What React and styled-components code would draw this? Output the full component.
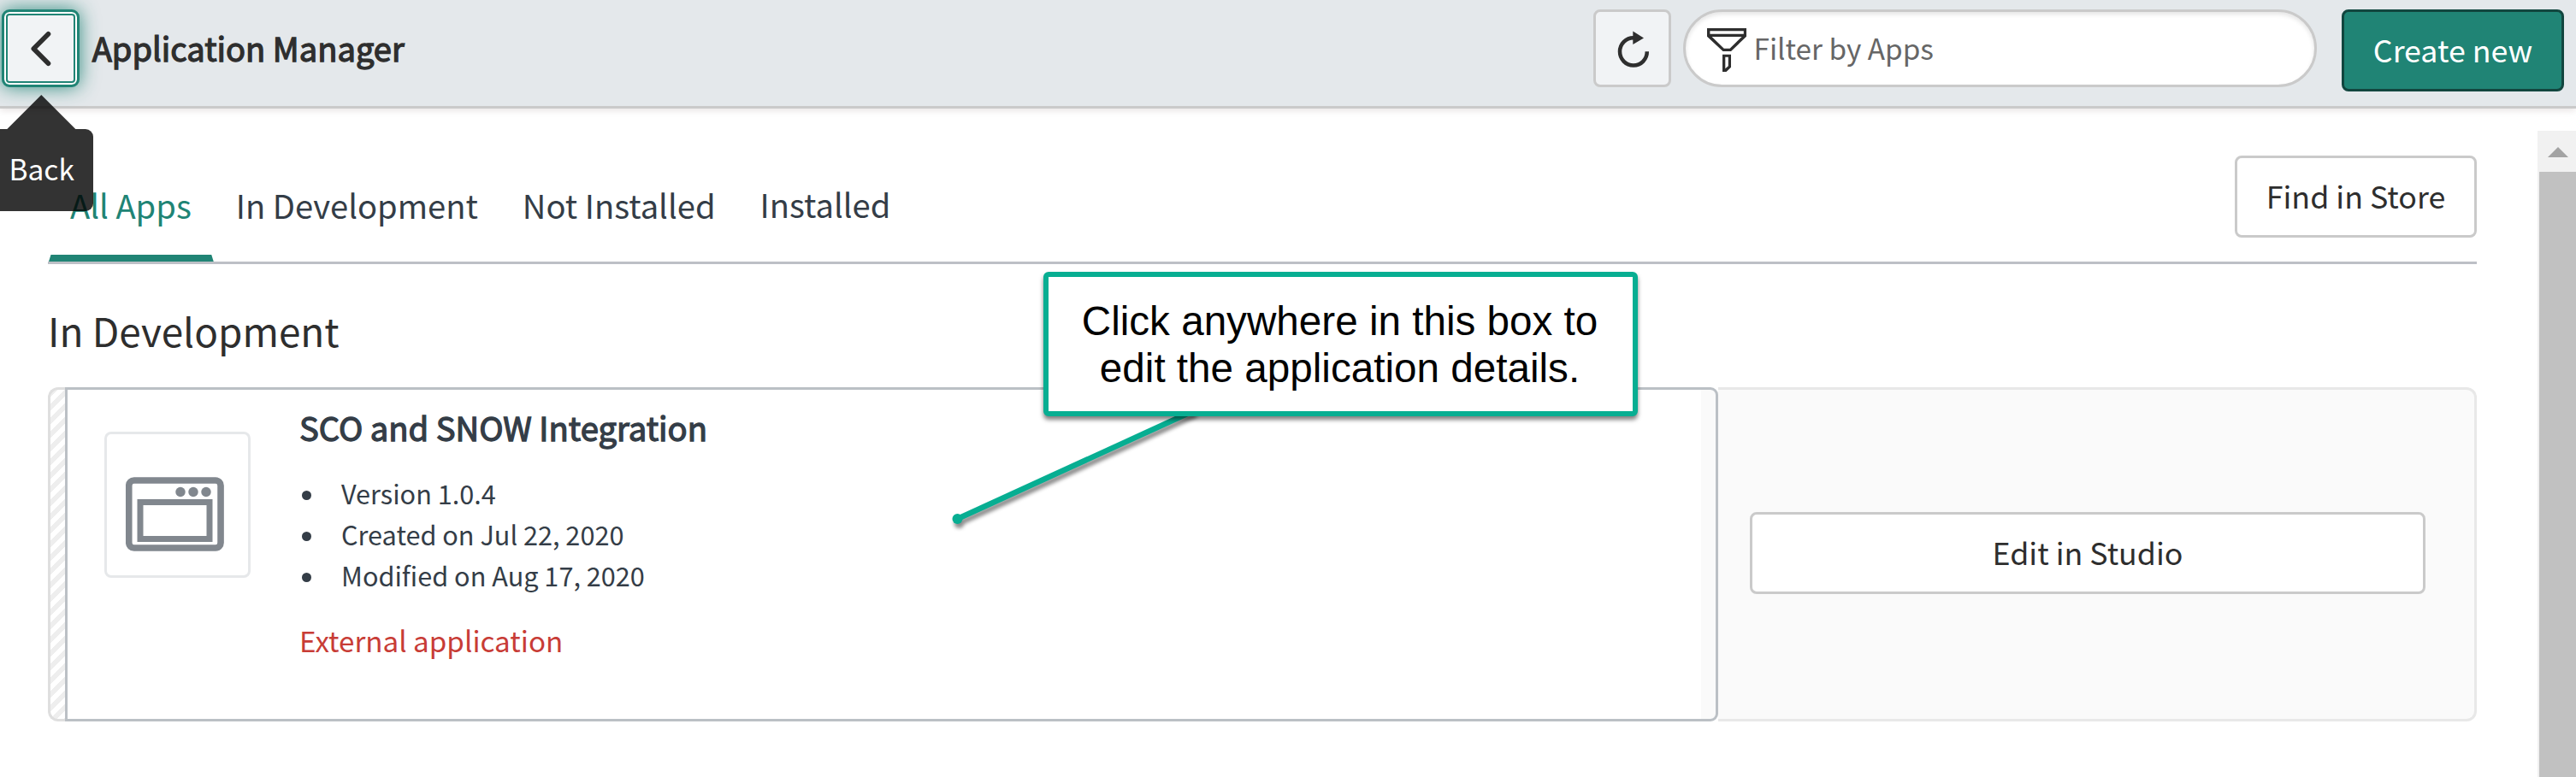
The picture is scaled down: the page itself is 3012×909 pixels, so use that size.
import React from "react";
import styled, { createGlobalStyle } from "styled-components";

const teal = "#208475";
const line = "#bdc0c6";
const edge = "#cacaca";
const ink = "#2e2e2e";
const slate = "#343d47";
const family = `"Noto Sans CJK SC", "Noto Sans", sans-serif`;

const Global = createGlobalStyle`
  *, *::before, *::after { box-sizing: border-box; }
  body { margin: 0; background: #fff; font-family: ${family}; }
  button, input { font-family: inherit; margin: 0; }
  h1, h2, h3, ul, p { margin: 0; padding: 0; font-weight: 400; }
`;

const Page = styled.div`
  position: relative;
  display: flex;
  flex-direction: column;
  width: 3012px;
  height: 909px;
  overflow: hidden;
  background: #fff;
`;

const Header = styled.header`
  display: flex;
  align-items: flex-start;
  height: 127px;
  flex: none;
  padding: 11px 14px 0 2px;
  background: #e4e8eb;
  border-bottom: 3px solid ${edge};
  box-shadow: 0 2px 8px rgba(60, 20, 20, 0.12);
`;

const BackButton = styled.button`
  display: flex;
  align-items: center;
  justify-content: center;
  width: 91px;
  height: 91px;
  padding: 0;
  border: 3px solid ${teal};
  border-radius: 9px;
  background: #f1f3f5;
  box-shadow: inset 0 0 0 2px #fff, inset 0 0 0 4px ${teal}, 0 0 22px rgba(32, 132, 117, 0.9);
`;

const Title = styled.h1`
  margin: 22px auto 0 14.7px;
  font-size: 38.1px;
  line-height: 45px;
  color: ${ink};
  -webkit-text-stroke: 1.3px ${ink};
  white-space: nowrap;
`;

const RefreshButton = styled.button`
  display: flex;
  width: 91px;
  height: 91px;
  padding: 0;
  border: 3px solid ${edge};
  border-radius: 8px;
  background: #f1f3f5;
`;

const FilterBox = styled.label`
  display: flex;
  align-items: flex-start;
  width: 741px;
  height: 91px;
  margin: 0 29px 0 14px;
  padding-left: 25px;
  border: 3px solid ${edge};
  border-radius: 46px;
  background: #fff;
  box-shadow: inset 0 3px 5px rgba(0, 0, 0, 0.1);
`;

const FilterText = styled.span`
  margin: 17px 0 0 8.5px;
  font-size: 33.35px;
  line-height: 50px;
  color: #666;
  white-space: nowrap;
`;

const Button = styled.button`
  width: ${(p) => p.$width}px;
  height: 96px;
  flex: none;
  padding: 0 0 3px;
  border: 3px solid ${(p) => (p.$primary ? "#12463f" : edge)};
  border-radius: 8px;
  background: ${(p) => (p.$primary ? teal : "#fff")};
  color: ${(p) => (p.$primary ? "#fff" : ink)};
  font-size: 35.75px;
  line-height: 50px;
  white-space: nowrap;
`;

const Body = styled.div`
  display: flex;
  flex: 1;
  min-height: 0;
`;

const Main = styled.main`
  flex: 1;
  padding: 0 71px 0 56px;
`;

const TabBar = styled.nav`
  display: flex;
  align-items: flex-start;
  justify-content: space-between;
  height: 182px;
  border-bottom: 3px solid ${line};
  padding-top: 55px;
`;

const TabList = styled.div`
  display: flex;
  height: 124px;
`;

const Tab = styled.div`
  position: relative;
  padding: ${(p) => p.$top || 35}px 26px 0;
  font-size: 38.15px;
  line-height: 46px;
  color: ${(p) => (p.$active ? teal : slate)};
  white-space: nowrap;
  &::after {
    content: "";
    display: ${(p) => (p.$active ? "block" : "none")};
    position: absolute;
    left: 1px;
    right: 0;
    bottom: 0;
    height: 8px;
    background: ${teal};
    clip-path: polygon(2.5px 0, calc(100% - 2.5px) 0, 100% 100%, 0 100%);
  }
`;

const SectionTitle = styled.h2`
  margin-top: 53px;
  height: 91px;
  font-size: 45.9px;
  line-height: 48px;
  color: ${ink};
`;

const Card = styled.section`
  display: flex;
  height: 391px;
`;

const Stripe = styled.div`
  width: 20px;
  border: 3px solid #dfdfdf;
  border-right: 0;
  border-radius: 12px 0 0 12px;
  background: linear-gradient(135deg, #eee 25%, #fff 25%, #fff 50%, #eee 50%, #eee 75%, #fff 75%) 0 0 / 16px 16px padding-box;
`;

const Details = styled.div`
  display: flex;
  width: 1933px;
  padding: 49px 0 0 43px;
  border: 3px solid #bbc0c5;
  border-radius: 0 9px 9px 0;
  background: linear-gradient(90deg, #fff 1910px, #fafafa 1910px);
`;

const Actions = styled.div`
  display: flex;
  flex: 1;
  padding: 143px 57px 0 37px;
  border: 3px solid #e8e8e8;
  border-left: 0;
  border-radius: 0 12px 12px 0;
  background: #fafafa;
`;

const AppIcon = styled.div`
  width: 171px;
  height: 171px;
  flex: none;
  border: 3px solid #e6e8ea;
  border-radius: 8px;
  padding: 50px 0 0 22px;
  svg { display: block; }
`;

const Info = styled.div`
  margin: -30px 0 0 57px;
`;

const AppName = styled.h3`
  font-size: 38.2px;
  line-height: 50px;
  color: ${slate};
  -webkit-text-stroke: 1.3px ${slate};
  white-space: nowrap;
`;

const Facts = styled.ul`
  margin-top: 28px;
  list-style: none;
`;

const Fact = styled.li`
  display: flex;
  height: 48px;
  font-size: 30.65px;
  line-height: 48px;
  color: ${slate};
  white-space: nowrap;
  &::before {
    content: "";
    width: 11px;
    height: 11px;
    margin: 21px 35px 0 3px;
    border-radius: 50%;
    background: ${slate};
  }
`;

const Warning = styled.p`
  margin-top: 28px;
  font-size: 33.2px;
  line-height: 48px;
  color: #c83c36;
`;

const Scrollbar = styled.div`
  display: flex;
  flex-direction: column;
  width: 45px;
  margin-top: 26px;
  padding-left: 2px;
  background: #f1f1f1;
`;

const ScrollArrow = styled.div`
  height: 48px;
  padding: 19px 0 0 10px;
  svg { display: block; }
`;

const ScrollThumb = styled.div`
  flex: 1;
  background: #c1c1c1;
`;

const Tooltip = styled.div`
  position: absolute;
  z-index: 1;
  left: 0;
  top: 111px;
  width: 109px;
  height: 136px;
  padding: 66px 0 0 10.5px;
  color: #fff;
  font-size: 33.5px;
  line-height: 40px;
  &::before, &::after {
    content: "";
    position: absolute;
    left: 0;
    z-index: -1;
    width: 109px;
    background: rgba(0, 0, 0, 0.8);
  }
  &::before {
    top: 0;
    height: 40px;
    clip-path: polygon(48.3px 0, 88.3px 100%, 8.3px 100%);
  }
  &::after {
    top: 40px;
    height: 96px;
    border-radius: 0 9px 9px 0;
  }
`;

const Pointer = styled.svg`
  position: absolute;
  left: 1100px;
  top: 470px;
  filter: drop-shadow(2px 5px 2px rgba(0, 0, 0, 0.45));
`;

const Callout = styled.div`
  position: absolute;
  left: 1220px;
  top: 318px;
  width: 695px;
  height: 169px;
  padding: 25px 2px 0 0;
  border: 6px solid #07ae92;
  border-radius: 6px;
  background: #fff;
  box-shadow: 0 4px 5px rgba(0, 0, 0, 0.5);
  font-family: "Liberation Sans", Arial, sans-serif;
  font-size: 47.64px;
  line-height: 54.6px;
  text-align: center;
  color: #000;
`;

const CalloutLine = styled.div`
  white-space: nowrap;
`;

const tabs = [
  { label: "All Apps", active: true },
  { label: "In Development" },
  { label: "Not Installed" },
  { label: "Installed", top: 34 },
];

const facts = ["Version 1.0.4", "Created on Jul 22, 2020", "Modified on Aug 17, 2020"];

export default function App() {
  return (
    <>
      <Global />
      <Page>
        <Header>
          <BackButton aria-label="Back">
            <svg width="85" height="85" viewBox="5 14 85 85" fill="none" stroke={ink} strokeWidth="5.6" strokeLinecap="round" strokeLinejoin="round">
              <path d="M56.5 39.7 39.3 57 56.5 74.3" />
            </svg>
          </BackButton>
          <Title>Application Manager</Title>
          <RefreshButton aria-label="Refresh">
            <svg width="85" height="85" viewBox="1866 14 85 85">
              <path d="M1925.8 60.3A15.9 16.2 0 1 1 1910 44.2" fill="none" stroke={ink} strokeWidth="4.5" />
              <path d="M1909.3 36.6V52L1922 44.5Z" fill={ink} />
            </svg>
          </RefreshButton>
          <FilterBox>
            <svg width="46" height="85" viewBox="1996 14 46 85" fill={ink} fillRule="evenodd">
              <path d="M1996 33H2042V42.8L2024 60H2014.5L1996 42.8ZM1999.4 36.2V39.8H2038.8V36.2ZM2001.6 43 2015.8 56.8H2022.6L2036.6 43Z" />
              <path d="M2014 63.7H2024V78.8L2018.5 84H2014ZM2017.3 66.8V80.2L2020.8 77.2V66.8Z" />
            </svg>
            <FilterText>Filter by Apps</FilterText>
          </FilterBox>
          <Button $primary $width={260}>Create new</Button>
        </Header>
        <Body>
          <Main>
            <TabBar>
              <TabList>
                {tabs.map((t) => (
                  <Tab key={t.label} $active={t.active} $top={t.top}>{t.label}</Tab>
                ))}
              </TabList>
              <Button $width={283}>Find in Store</Button>
            </TabBar>
            <SectionTitle>In Development</SectionTitle>
            <Card>
              <Stripe />
              <Details>
                <AppIcon>
                  <svg width="115" height="87" viewBox="0 0 115 87" fill="none" stroke="#81878e">
                    <rect x="3.75" y="4" width="107.3" height="79" rx="6" strokeWidth="7.6" />
                    <rect x="17" y="29.5" width="81" height="43" strokeWidth="7" />
                    <g fill="#81878e" stroke="none">
                      <circle cx="64" cy="17.5" r="5.7" />
                      <circle cx="79" cy="17.5" r="5.7" />
                      <circle cx="94" cy="17.5" r="5.7" />
                    </g>
                  </svg>
                </AppIcon>
                <Info>
                  <AppName>SCO and SNOW Integration</AppName>
                  <Facts>
                    {facts.map((f) => (
                      <Fact key={f}>{f}</Fact>
                    ))}
                  </Facts>
                  <Warning>External application</Warning>
                </Info>
              </Details>
              <Actions>
                <Button $width={790}>Edit in Studio</Button>
              </Actions>
            </Card>
          </Main>
          <Scrollbar>
            <ScrollArrow>
              <svg width="24" height="12" viewBox="0 0 24 12"><path d="M12 0 24 12H0Z" fill="#a3a3a3" /></svg>
            </ScrollArrow>
            <ScrollThumb />
          </Scrollbar>
        </Body>
        <Tooltip>Back</Tooltip>
        <Pointer width="320" height="160" fill="#07ae92">
          <path d="M19.5 137 297 10" stroke="#07ae92" strokeWidth="6.5" />
          <circle cx="19.5" cy="137" r="6" />
        </Pointer>
        <Callout>
          <CalloutLine>Click anywhere in this box to</CalloutLine>
          <CalloutLine>edit the application details.</CalloutLine>
        </Callout>
      </Page>
    </>
  );
}
